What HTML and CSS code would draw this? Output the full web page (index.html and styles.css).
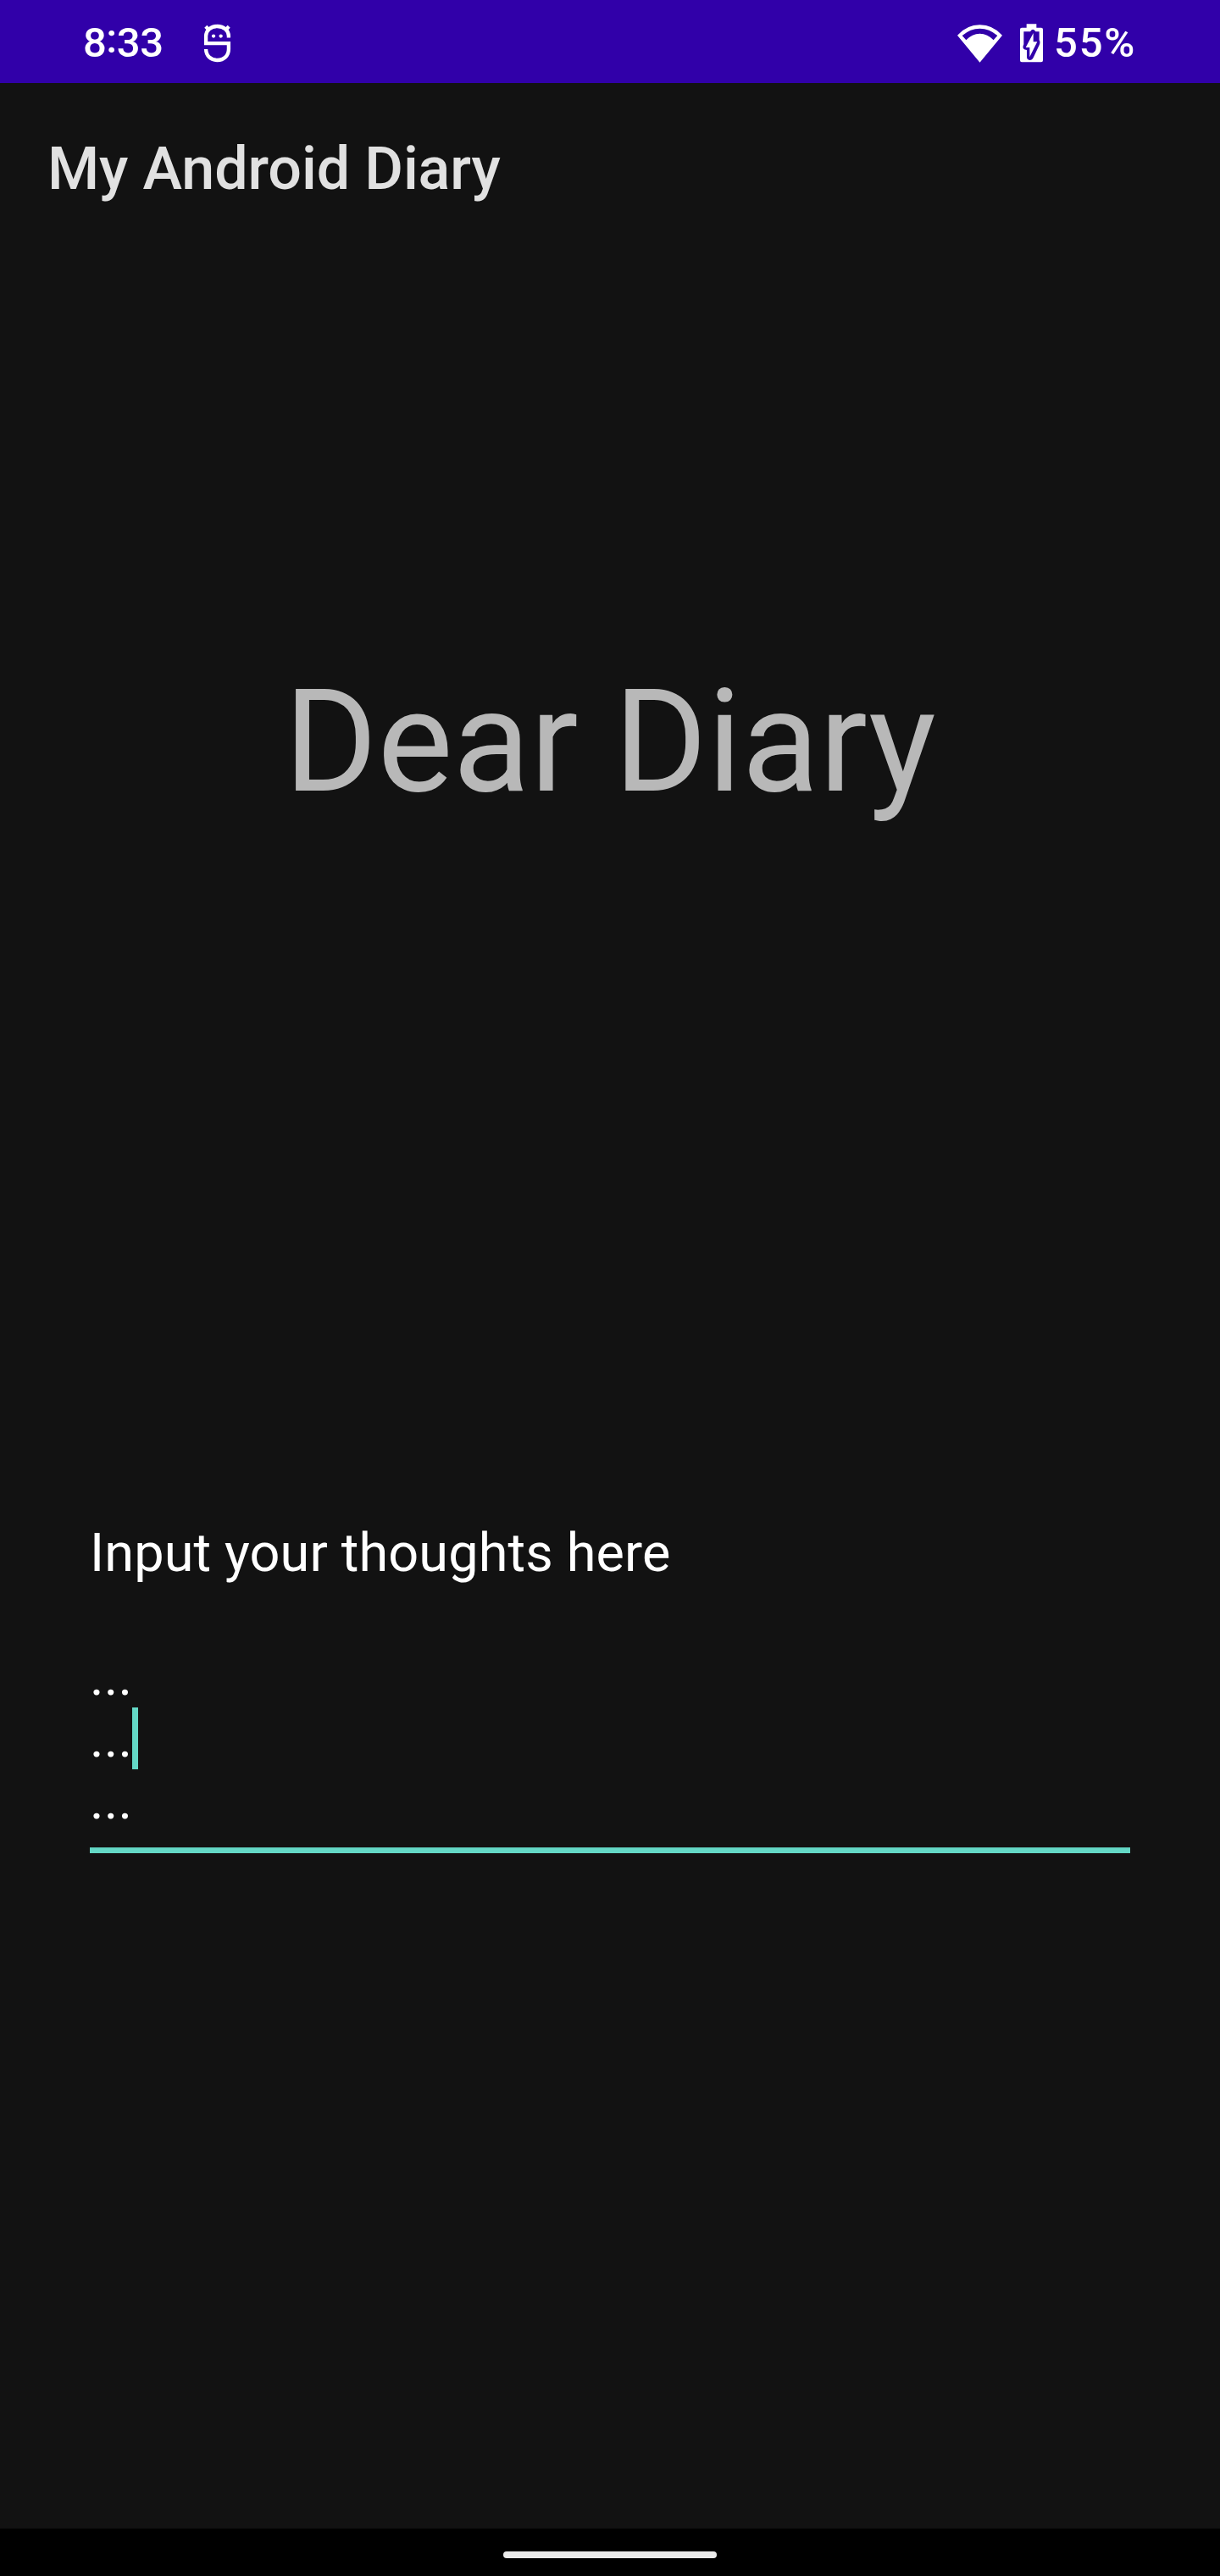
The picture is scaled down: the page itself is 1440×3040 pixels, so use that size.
FILE: index.html
```html
<!DOCTYPE html>
<html lang="en">
<head>
<meta charset="utf-8">
<title>My Android Diary</title>
<link rel="stylesheet" href="styles.css">
</head>
<body>
<div class="screen">
  <header class="status-bar">
    <span class="clock">8<span class="colon">:</span>33</span>
    <svg class="notification-icon" viewBox="480 54 99 139" fill="none" stroke="#fff" stroke-width="13">
      <path d="M570 104V98C570 78 553 63 529.5 63S489 78 489 98V124H570V145C570 168 553 184 529.5 184S489 168 489 145"/>
      <path d="M488 64L502 78M571 64L557 78"/>
      <g fill="#fff" stroke="none"><circle cx="516" cy="98" r="6.5"/><circle cx="542" cy="98" r="6.5"/></g>
    </svg>
    <svg class="wifi-icon" viewBox="60 54 159 135" fill="#fff">
      <path fill-rule="evenodd" d="M60 92Q94 55 139.500 55T219 92L139.500 188ZM77 93L91 109Q112 86 139.500 86T188 109L202 93Q173 68 139.500 68T77 93Z"/>
    </svg>
    <svg class="battery-icon" viewBox="282 54 81 138">
      <path fill="#fff" d="M305 55H340V68H357Q363 68 363 74V184Q363 190 357 190H288Q282 190 282 184V74Q282 68 288 68H305Z"/>
      <path fill="#3100a9" d="M295 82H318L323 76Q331 71 337 82H350V112Q355 119 350 130L329 174Q325 183 316 183Q306 182 306 172V147Q289 146 293 132L295 127Z"/>
      <path fill="#fff" d="M329 87V118H343L316 172V138H302Z"/>
    </svg>
    <span class="battery-level">55%</span>
  </header>
  <div class="app-bar"><h1 class="app-title">My Android Diary</h1></div>
  <main class="content">
    <h2 class="heading">Dear Diary</h2>
    <div class="entry">Input your thoughts here

...
...<span class="caret"></span>
...</div>
  </main>
  <footer class="nav-bar"><div class="nav-handle"></div></footer>
</div>
</body>
</html>
```
FILE: styles.css
```css
* { box-sizing: border-box; }
body { margin: 0; background: #121212; }
.screen {
  width: 1440px;
  height: 3040px;
  display: flex;
  flex-direction: column;
  background: #121212;
  font-family: Roboto, sans-serif;
}
.status-bar {
  height: 98px;
  flex: none;
  display: flex;
  align-items: center;
  padding: 4px 98px 0;
  background: #3100a9;
  color: #fff;
  font: 500 49px/60px Roboto, sans-serif;
}
.clock { width: 96px; letter-spacing: -0.5px; white-space: nowrap; }
.colon { line-height: 0; vertical-align: 5px; }
.notification-icon { width: 33px; height: 46px; margin-left: 46px; }
.wifi-icon { width: 53px; height: 45px; margin-left: auto; }
.battery-icon { width: 27px; height: 46px; margin-left: 21px; }
.battery-level { width: 98px; margin-left: 13px; letter-spacing: 1.8px; white-space: nowrap; }
.app-bar {
  height: 196px;
  flex: none;
  display: flex;
  align-items: center;
  padding: 6px 56px 0;
}
.app-title { margin: 0; font-size: 70px; line-height: 82px; font-weight: 500; letter-spacing: -0.1px; color: #e1e1e1; }
.content { flex: 1; display: flex; flex-direction: column; }
.heading {
  margin: 483px 0 0;
  font-size: 168px;
  line-height: 197px;
  font-weight: 400;
  text-align: center;
  color: #b8b8b8;
}
.entry {
  margin: 822px 106px 0;
  height: 391px;
  border-bottom: 6px solid #64d8c6;
  box-shadow: inset 0 -1px #50aa9c;
  font-size: 63px;
  line-height: 73px;
  letter-spacing: 0.13px;
  color: #fff;
  white-space: pre;
}
.caret {
  display: inline-block;
  width: 7px;
  height: 73px;
  vertical-align: top;
  background: #64d8c6;
}
.nav-bar {
  height: 56px;
  flex: none;
  display: flex;
  align-items: center;
  justify-content: center;
  padding-top: 6px;
  background: #000;
}
.nav-handle { width: 252px; height: 8px; border-radius: 4px; background: #ebebeb; }
```
